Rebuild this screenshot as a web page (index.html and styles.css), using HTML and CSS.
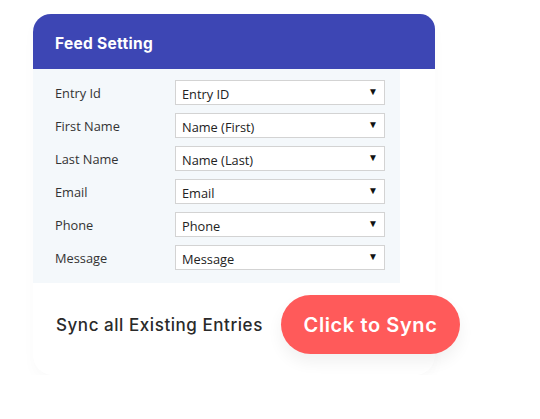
FILE: index.html
```html
<!DOCTYPE html>
<html>
<head>
<meta charset="utf-8">
<link rel="stylesheet" href="styles.css">
</head>
<body>
<div class="card">
  <div class="card-head">Feed Setting</div>
  <div class="card-body">
    <div class="row"><span class="label">Entry Id</span><div class="select"><span>Entry ID</span><span class="arrow">▼</span></div></div>
    <div class="row"><span class="label">First Name</span><div class="select"><span>Name (First)</span><span class="arrow">▼</span></div></div>
    <div class="row"><span class="label">Last Name</span><div class="select"><span>Name (Last)</span><span class="arrow">▼</span></div></div>
    <div class="row"><span class="label">Email</span><div class="select"><span>Email</span><span class="arrow">▼</span></div></div>
    <div class="row"><span class="label">Phone</span><div class="select"><span>Phone</span><span class="arrow">▼</span></div></div>
    <div class="row"><span class="label">Message</span><div class="select"><span>Message</span><span class="arrow">▼</span></div></div>
  </div>
  <div class="card-foot">
    <span class="sync-label">Sync all Existing Entries</span>
    <button class="sync-btn">Click to Sync</button>
  </div>
</div>
</body>
</html>
```
FILE: styles.css
```css
html, body { margin: 0; padding: 0; background: #fff; }
body { padding: 14px 0 0 33px; }
.card {
  width: 402px;
  background: #fff;
  border-radius: 18px 15px 20px 20px;
  box-shadow: 0 6px 14px rgba(0,0,0,0.025);
  padding-bottom: 21px;
}
.card-head {
  height: 55px;
  box-sizing: border-box;
  background: #3d46b4;
  border-radius: 18px 15px 0 0;
  color: #fff;
  font-family: "Inter", sans-serif;
  font-weight: 700;
  font-size: 15.5px;
  letter-spacing: 0.3px;
  padding-left: 22px;
  display: flex;
  align-items: center;
  padding-top: 4px;
}
.card-body {
  width: 367px;
  box-sizing: border-box;
  background: #f4f8fb;
  padding: 11px 0 13px 22px;
  display: flex;
  flex-direction: column;
  gap: 8px;
}
.row { display: flex; align-items: center; height: 25px; }
.label {
  width: 120px;
  font-family: "Open Sans", sans-serif;
  font-size: 12.8px;
  color: #333;
  padding-top: 1px;
}
.select {
  width: 210px;
  height: 25px;
  box-sizing: border-box;
  background: #fff;
  border: 1px solid #d3d3d3;
  display: flex;
  align-items: center;
  justify-content: space-between;
  padding: 2px 6px 0 6px;
  font-family: "Open Sans", sans-serif;
  font-size: 12.8px;
  color: #222;
}
.arrow { font-size: 10px; color: #111; margin-top: -6px; }
.card-foot {
  display: flex;
  align-items: center;
  padding: 12px 0 0 23px;
}
.sync-label {
  font-family: "Inter", sans-serif;
  font-weight: 500;
  font-size: 17px;
  letter-spacing: 0.55px;
  color: #2a2a2a;
  width: 225px;
  white-space: nowrap;
}
.sync-btn {
  width: 179px;
  height: 59px;
  border: 0;
  border-radius: 30px;
  background: #ff5a5a;
  color: #fff;
  font-family: "Inter", sans-serif;
  font-weight: 600;
  font-size: 20px;
  letter-spacing: 0.6px;
  box-shadow: 0 8px 16px rgba(0,0,0,0.06);
  padding: 0;
  margin-right: -25px;
}
```
